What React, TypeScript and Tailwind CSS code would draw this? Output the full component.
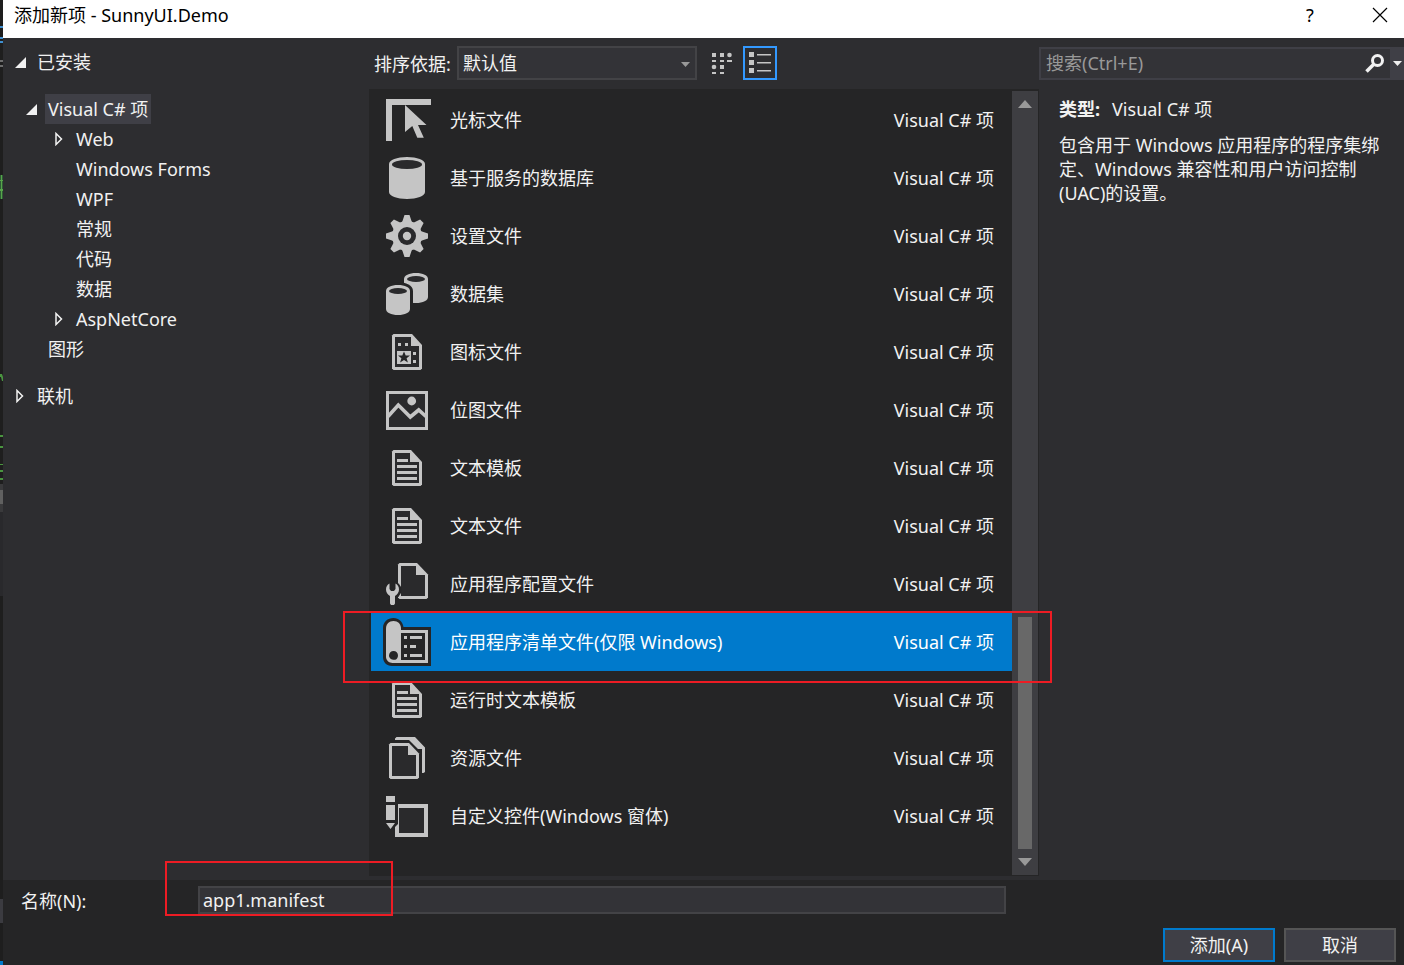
import React, { useState } from 'react';

interface TreeNode {
  label: string;
  level: 1 | 2;
  expander?: 'open' | 'closed';
  selected?: boolean;
}

interface Template {
  name: string;
  icon: React.ReactNode;
}

const CATEGORY = 'Visual C# 项';

const treeNodes: TreeNode[] = [
  { label: CATEGORY, level: 1, expander: 'open', selected: true },
  { label: 'Web', level: 2, expander: 'closed' },
  { label: 'Windows Forms', level: 2 },
  { label: 'WPF', level: 2 },
  { label: '常规', level: 2 },
  { label: '代码', level: 2 },
  { label: '数据', level: 2 },
  { label: 'AspNetCore', level: 2, expander: 'closed' },
  { label: '图形', level: 1 },
];

const ItemIcon = ({ children }: { children: React.ReactNode }) => (
  <svg className="h-12 w-12 shrink-0" viewBox="0 0 48 48" fill="#c5c5c5" aria-hidden="true">
    {children}
  </svg>
);

const CursorIcon = () => (
  <ItemIcon>
    <path d="M3 3h45v6H9v36H3z" />
    <path d="M22 9l21.5 20H35l5.8 12.7h-6.5l-5-11.7L22 36z" />
  </ItemIcon>
);

const DatabaseIcon = () => (
  <ItemIcon>
    <path d="M6 10c0-4 8-7 18-7s18 3 18 7v28c0 4-8 7-18 7S6 42 6 38z" />
    <ellipse cx="24" cy="10.5" rx="15" ry="4.6" fill="#2a2a2c" />
  </ItemIcon>
);

const GearIcon = () => (
  <ItemIcon>
    <circle cx="24" cy="24" r="15" />
    {[0, 45, 90, 135, 180, 225, 270, 315].map((angle) => (
      <path key={angle} d="M21.5 3h5l2 6 1.500 3h-12l1.500-3z" transform={`rotate(${angle} 24 24)`} />
    ))}
    <circle cx="24" cy="24" r="9" fill="#2a2a2c" />
    <circle cx="24" cy="24" r="4.2" />
  </ItemIcon>
);

const DataSetIcon = () => (
  <ItemIcon>
    <path d="M21 9c0-3.5 5-6 12-6s12 2.5 12 6v18c0 3.5-5 6-12 6s-12-2.5-12-6z" />
    <ellipse cx="33" cy="9" rx="9" ry="3" fill="#2a2a2c" />
    <path d="M0 21c0-5.5 7-9 15-9s15 3.5 15 9v27H0z" fill="#252526" />
    <path d="M3 21c0-3.5 5-6 12-6s12 2.5 12 6v18c0 3.5-5 6-12 6S3 42.5 3 39z" />
    <ellipse cx="15" cy="21" rx="9" ry="3" fill="#2a2a2c" />
  </ItemIcon>
);

const IconFileIcon = () => (
  <ItemIcon>
    <path d="M10.5 6H29l10 11v23.5L37.5 42h-27L9 40.5v-33z" />
    <path d="M12 9h16v9h8v21H12z" fill="#2a2a2c" />
    <path d="M15 15h3v3h-3zM22 15h3v3h-3zM14 23h14v13H14zM30 24h3v3h-3zM30 32h3v3h-3z" />
    <path d="M21 23.5l1.7 4h4.3l-3.4 2.7 1.3 4.3-3.9-2.5-3.9 2.5 1.3-4.3-3.4-2.7h4.3z" fill="#252526" />
  </ItemIcon>
);

const BitmapIcon = () => (
  <ItemIcon>
    <path d="M3 5h42v39H3z" />
    <path d="M6 8h36v33H6z" fill="#2a2a2c" />
    <circle cx="28.7" cy="15" r="4.4" />
    <path d="M5 30.5L15.3 19l12 12 8.4-7 7.3 6.5" fill="none" stroke="#c5c5c5" strokeWidth="3.6" />
  </ItemIcon>
);

const TextFileIcon = () => (
  <ItemIcon>
    <path d="M10.5 6H28l11 12v22.5L37.5 42h-27L9 40.5v-33z" />
    <path d="M12 9h15v9h9v21H12z" fill="#2a2a2c" />
    <path d="M14 15h11v3H14zM14 21h20v3H14zM14 27h20v3H14zM14 33h20v3H14z" />
  </ItemIcon>
);

const ConfigIcon = () => (
  <ItemIcon>
    <path d="M16.5 3H34l11 11.5v23L43.5 39h-27L15 37.5v-33z" />
    <path d="M18 6h15v9h9v21H18z" fill="#2a2a2c" />
    <circle cx="9.5" cy="30" r="9" fill="#252526" />
    <path d="M6.5 23.6V29l1.5 2h3l1.500-2v-5.400c2.200 1.200 3.500 3.400 3.500 5.900 0 3-1.600 5-4 6.500v7.500l-1 1.500H8l-1-1.500V36c-2.400-1.500-4-3.500-4-6.500 0-2.500 1.300-4.700 3.500-5.900z" />
  </ItemIcon>
);

const ManifestIcon = () => (
  <ItemIcon>
    <path d="M10.5 0C16 0 19.5 3.5 20.5 9H48v39H9c-5.5 0-9-4-9-9V10C0 4 4.5 0 10.5 0z" fill="#252526" />
    <path d="M18 12h27v33H9v-3h33V15H18z" />
    <path d="M3 10.5C3 6 6 3 10.5 3S18 6 18 10.5V42l-2 3H9.5C6 45 3 42 3 39z" />
    <path d="M10.5 33c2.7 0 4.5 2 4.5 4.5 0 1.5-.8 3-2 4-3 1-7-.5-7-4C6 35 8 33 10.5 33z" fill="#252526" />
    <path d="M21 18h3v3h-3zM27 18h12v3H27zM21 27h3v3h-3zM27 27h6v3h-6zM21 36h3v3h-3zM27 36h12v3H27z" />
  </ItemIcon>
);

const ResourceIcon = () => (
  <ItemIcon>
    <path d="M13.5 3H32l10 10.5V38l-1.5 1H39V15h-4l-6-6-3-3H12V4.5z" />
    <path d="M7.5 9H26l10 10.5v24L34.5 45h-27L6 43.5v-33z" />
    <path d="M9 12h16v9h8v21H9z" fill="#2a2a2c" />
  </ItemIcon>
);

const ControlIcon = () => (
  <ItemIcon>
    <path d="M12 12h33v33H12z" />
    <path d="M16 16h25v25H16z" fill="#2a2a2c" />
    <path d="M0 0h15v32l-3 3H0z" fill="#252526" />
    <path d="M3 4h9v6H3zM3 13h9v15H3zM3 31h9l-4.5 6z" />
  </ItemIcon>
);

const templates: Template[] = [
  { name: '光标文件', icon: <CursorIcon /> },
  { name: '基于服务的数据库', icon: <DatabaseIcon /> },
  { name: '设置文件', icon: <GearIcon /> },
  { name: '数据集', icon: <DataSetIcon /> },
  { name: '图标文件', icon: <IconFileIcon /> },
  { name: '位图文件', icon: <BitmapIcon /> },
  { name: '文本模板', icon: <TextFileIcon /> },
  { name: '文本文件', icon: <TextFileIcon /> },
  { name: '应用程序配置文件', icon: <ConfigIcon /> },
  { name: '应用程序清单文件(仅限 Windows)', icon: <ManifestIcon /> },
  { name: '运行时文本模板', icon: <TextFileIcon /> },
  { name: '资源文件', icon: <ResourceIcon /> },
  { name: '自定义控件(Windows 窗体)', icon: <ControlIcon /> },
];

const HIGHLIGHTED = 9;

const Expander = ({ state }: { state?: 'open' | 'closed' }) => (
  <svg className="h-[14px] w-3 shrink-0" viewBox="0 0 12 14" aria-hidden="true">
    {state === 'open' && <path d="M11 2v11H0z" fill="#f1f1f1" />}
    {state === 'closed' && <path d="M2 1.5v11L7.5 7z" fill="none" stroke="#f1f1f1" strokeWidth="1.5" />}
  </svg>
);

// Sliver of the editor window that stays visible behind the dialog
const EditorEdge = () => (
  <div className="w-[3px] shrink-0 bg-[#1e1e1e]">
    <svg width="3" height="965" viewBox="0 0 3 965" aria-hidden="true">
      <path d="M0 26h3v2H0zM0 37h3v2H0zM0 41h3v2H0z" fill="#3f8fd0" />
      <path d="M0 60h3v2H0zM0 65h3v2H0z" fill="#6e6e6e" />
      <path d="M0 175h3v24H0z" fill="#2f5a36" />
      <path d="M0 180h3v1H0zM0 189h3v2H0zM1 175h1v24H1z" fill="#57a64a" />
      <path d="M0 374h2l1 3v4H2l-1-4H0zM0 435h3v2H0zM0 446h3v2H0zM0 464h3v1H0zM0 470h3v2H0zM0 478h3v2H0z" fill="#4a9440" />
      <path d="M0 484h3v28H0z" fill="#3a3a3c" />
      <path d="M0 490h3v14H0z" fill="#606060" />
      <path d="M0 512h3v84H0z" fill="#29292c" />
      <path d="M0 899h3v24H0z" fill="#3b3b40" />
      <path d="M0 961h3v4H0z" fill="#007acc" />
    </svg>
  </div>
);

const TitleBar = () => (
  <header className="flex h-[38px] items-center justify-between bg-white pl-[11px] pr-4 text-black">
    <h1 className="pb-2">添加新项 - SunnyUI.Demo</h1>
    <div className="flex items-center gap-14 pb-2">
      <button type="button" aria-label="帮助" className="w-3 leading-6">?</button>
      <button type="button" aria-label="关闭">
        <svg className="h-4 w-4" viewBox="0 0 16 16" fill="none" stroke="#000" strokeWidth="1.2">
          <path d="M1 1l14 14M15 1L1 15" />
        </svg>
      </button>
    </div>
  </header>
);

const CategoryTree = () => (
  <nav className="w-[366px] shrink-0 pt-[9px]" aria-label="模板类别">
    <button type="button" className="flex h-[30px] items-center gap-2.5 pl-3">
      <Expander state="open" />
      已安装
    </button>
    <ul className="my-[17px]">
      {treeNodes.map((node) => (
        <li key={node.label} className={node.level === 1 ? 'flex h-[30px] items-center gap-[7px] pl-[23px]' : 'flex h-[30px] items-center gap-[7px] pl-[51px]'}>
          <Expander state={node.expander} />
          <button type="button" className={node.selected ? 'h-[30px] bg-[#3f3f46] px-[3px]' : 'h-[30px] px-[3px]'}>
            {node.label}
          </button>
        </li>
      ))}
    </ul>
    <button type="button" className="flex h-[30px] items-center gap-2.5 pl-3">
      <Expander state="closed" />
      联机
    </button>
  </nav>
);

const SortBar = () => (
  <div className="flex h-[51px] items-center pb-0.5 pl-[5px]">
    <label htmlFor="sort" className="w-[83px] shrink-0 pt-0.5">排序依据:</label>
    <div className="relative">
      <select id="sort" className="h-[34px] w-[240px] appearance-none border-2 border-[#434346] bg-[#333337] px-1 text-[#f1f1f1] outline-none">
        <option>默认值</option>
      </select>
      <svg className="pointer-events-none absolute right-[7px] top-4 h-[5px] w-[9px]" viewBox="0 0 9 5" aria-hidden="true">
        <path d="M0 0h9L4.5 5z" fill="#999" />
      </svg>
    </div>
    <button type="button" aria-label="中等图标" className="ml-2 flex h-[34px] w-[34px] items-center justify-center">
      <svg className="h-[22px] w-[22px]" viewBox="0 0 22 22" fill="#c5c5c5">
        <path d="M1 1h4v4H1zM9 1h4v4H9zM1 8h4v2H1zM9 8h4v2H9zM16 8h5v2h-5zM9 13h4v4H9zM1 20h4v2H1zM9 20h4v2H9z" />
        <circle cx="18.5" cy="3" r="2.3" />
        <circle cx="3" cy="15" r="2.3" />
      </svg>
    </button>
    <button type="button" aria-label="小图标" aria-pressed="true" className="ml-1 flex h-[34px] w-[34px] items-center justify-center border-2 border-[#3399ff]">
      <svg className="h-[22px] w-[22px]" viewBox="0 0 22 22" fill="#c5c5c5">
        <path d="M0 0h5v5H0zM0 8h5v5H0zM0 16h5v5H0z" />
        <path d="M8 2h14v1.5H8zM8 10h14v1.5H8zM8 18h14v1.5H8z" />
      </svg>
    </button>
  </div>
);

const ScrollBar = () => (
  <div className="flex w-[26px] shrink-0 flex-col items-center bg-[#3e3e42] py-[9px]" aria-hidden="true">
    <svg className="h-2 w-[14px]" viewBox="0 0 14 8">
      <path d="M7 0l7 8H0z" fill="#999" />
    </svg>
    <div className="mb-[9px] flex w-[14px] grow flex-col justify-end">
      <div className="h-[232px] bg-[#686868]" />
    </div>
    <svg className="h-2 w-[14px]" viewBox="0 0 14 8">
      <path d="M0 0h14L7 8z" fill="#999" />
    </svg>
  </div>
);

const TemplateList = ({ selected, onSelect }: { selected: number; onSelect: (index: number) => void }) => (
  <div className="mb-1 flex grow bg-[#252526] pl-0.5 pr-px pb-px pt-0.5">
    <ul className="grow">
      {templates.map((template, index) => (
        <li key={template.name} className="relative">
          <button
            type="button"
            onClick={() => onSelect(index)}
            className={
              index === selected
                ? 'flex h-[58px] w-full items-center bg-[#007acc] pl-3 pr-[18px] text-white'
                : 'flex h-[58px] w-full items-center pl-3 pr-[18px]'
            }
          >
            {template.icon}
            <span className="ml-[19px] grow text-left">{template.name}</span>
            <span>{CATEGORY}</span>
          </button>
          {index === HIGHLIGHTED && (
            <div className="pointer-events-none absolute -bottom-3 -left-7 -right-10 -top-0.5 z-10 border-2 border-[#ed1c24]" />
          )}
        </li>
      ))}
    </ul>
    <ScrollBar />
  </div>
);

const DetailsPane = () => (
  <aside className="w-[365px] shrink-0">
    <div className="mt-[9px] flex h-[33px] border-2 border-r-0 border-[#3f3f46] bg-[#333337]">
      <input
        type="search"
        aria-label="搜索"
        placeholder="搜索(Ctrl+E)"
        className="min-w-0 grow bg-transparent px-[5px] pb-0.5 outline-none placeholder:text-[#999]"
      />
      <button type="button" aria-label="开始搜索" className="pb-0.5 pr-[5px]">
        <svg className="h-5 w-5" viewBox="0 0 20 20" fill="none" stroke="#f1f1f1">
          <circle cx="12.5" cy="7.5" r="5" strokeWidth="3" />
          <path d="M8.5 11.5L1.5 18.5" strokeWidth="3.6" />
        </svg>
      </button>
      <button type="button" aria-label="搜索选项" className="flex w-[14px] items-center justify-center bg-[#3f3f46]">
        <svg className="h-[5px] w-[9px]" viewBox="0 0 9 5">
          <path d="M0 0h9L4.5 5z" fill="#f1f1f1" />
        </svg>
      </button>
    </div>
    <dl className="flex gap-3 pl-5 pt-[17px] leading-6">
      <dt className="font-bold">类型:</dt>
      <dd>{CATEGORY}</dd>
    </dl>
    <p className="pl-5 pr-3 pt-3 leading-6">
      包含用于 Windows 应用程序的程序集绑定、Windows 兼容性和用户访问控制(UAC)的设置。
    </p>
  </aside>
);

const Footer = ({ name, onNameChange }: { name: string; onNameChange: (value: string) => void }) => (
  <footer className="bg-[#252526] pb-[3px] pr-2 pt-1.5">
    <div className="flex items-center pl-[18px]">
      <label htmlFor="name" className="w-[177px] shrink-0 pt-0.5">名称(N):</label>
      <div className="relative mr-[390px] grow">
        <input
          id="name"
          type="text"
          value={name}
          onChange={(e) => onNameChange(e.target.value)}
          className="block h-7 w-full border-2 border-[#434346] bg-[#333337] px-[3px] outline-none"
        />
        <div className="pointer-events-none absolute -bottom-0.5 -left-[33px] -top-[25px] w-[228px] border-2 border-[#ed1c24]" />
      </div>
    </div>
    <div className="mt-3.5 flex justify-end gap-[9px]">
      <button type="submit" className="h-[34px] w-28 border-2 border-[#007acc] bg-[#3f3f46]">添加(A)</button>
      <button type="button" className="h-[34px] w-28 border-2 border-[#555555] bg-[#3f3f46]">取消</button>
    </div>
  </footer>
);

export default function App() {
  const [selected, setSelected] = useState(HIGHLIGHTED);
  const [name, setName] = useState('app1.manifest');

  return (
    <div className="flex min-h-screen bg-[#2d2d30] font-['Noto_Sans','Noto_Sans_CJK_SC',sans-serif] text-[18px] leading-6 text-[#f1f1f1]">
      <EditorEdge />
      <form className="flex min-w-0 grow flex-col" onSubmit={(e) => e.preventDefault()}>
        <TitleBar />
        <main className="flex grow">
          <CategoryTree />
          <section className="flex min-w-0 grow flex-col">
            <SortBar />
            <TemplateList selected={selected} onSelect={setSelected} />
          </section>
          <DetailsPane />
        </main>
        <Footer name={name} onNameChange={setName} />
      </form>
    </div>
  );
}
